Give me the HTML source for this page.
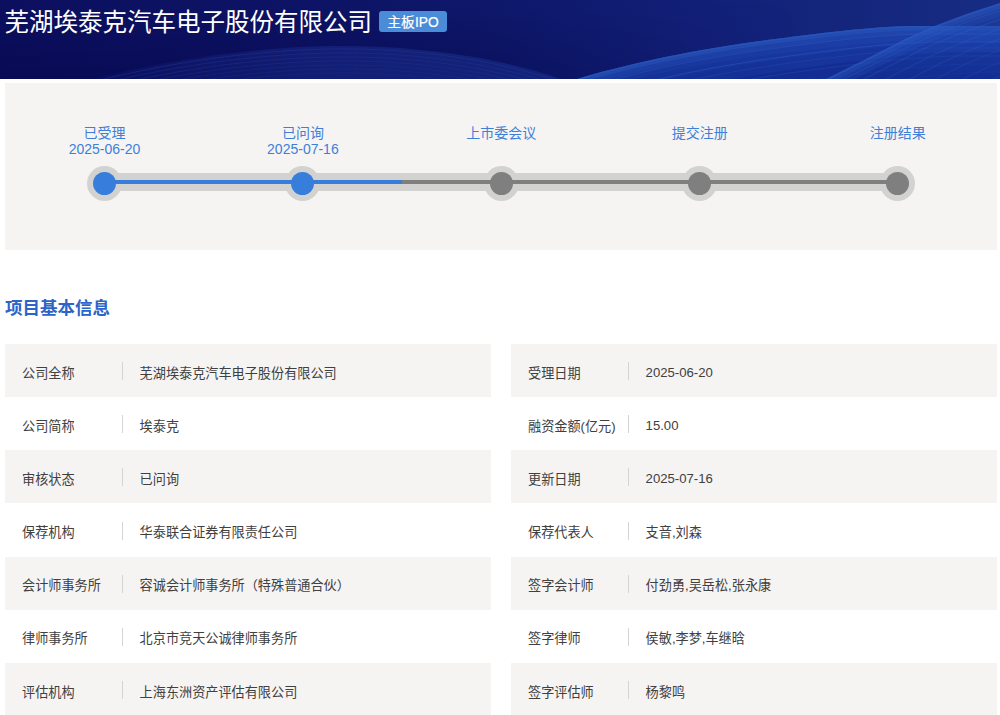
<!DOCTYPE html>
<html lang="zh-CN">
<head>
<meta charset="utf-8">
<title>芜湖埃泰克汽车电子股份有限公司</title>
<style>
*{box-sizing:border-box;margin:0;padding:0}
html,body{width:1000px;height:715px;overflow:hidden;background:#fff}
body{position:relative;font-family:"Liberation Sans","Noto Sans CJK SC",sans-serif;color:#333}
.hdr{position:absolute;left:0;top:0;width:1000px;height:79px;overflow:hidden;background:#0f1768}
.hdr svg{position:absolute;left:0;top:0}
.title{position:absolute;left:4.6px;top:5px;font-size:24.5px;line-height:36px;color:#fff;white-space:nowrap;font-weight:400}
.tag{position:absolute;left:379px;top:11px;width:68px;height:21px;border-radius:3px;background:#4a8cd8;color:#fff;font-size:13.8px;line-height:21px;padding-top:1.3px;-webkit-text-stroke:0.2px #fff;text-align:center;white-space:nowrap}
.prog{position:absolute;left:5px;top:83px;width:992px;height:167px;background:#f5f4f3}
.step{position:absolute;top:125px;width:160px;margin-left:-80px;text-align:center;color:#3e7fd9;font-size:14px;line-height:16px;white-space:nowrap}
.track{position:absolute;left:104px;top:173px;width:794px;height:18px;background:#d2d2d0}
.line{position:absolute;top:180px;height:4px}
.ring{position:absolute;top:166px;width:35px;height:35px;margin-left:-17.5px;border-radius:50%;background:#d2d2d0}
.dot{position:absolute;top:172px;width:23px;height:23px;margin-left:-11.5px;border-radius:50%}
.b{background:#377ddc}.g{background:#7f7f7f}
h2{position:absolute;left:5px;top:296px;font-size:17.5px;line-height:24px;color:#2c64c8;font-weight:700;white-space:nowrap}
.row{position:absolute;width:486px;height:53.17px;font-size:13.15px;line-height:53px;white-space:nowrap}
.row.o{background:#f5f4f3}
.row .k{position:absolute;left:17px;top:2.5px;color:#404040}
.row .v{position:absolute;left:134.6px;top:2.5px;color:#404040}
.row .v.n{top:1.9px}
.row i{position:absolute;left:117px;top:18px;width:1px;height:18px;background:#d4d4d4}
.L{left:5px}.R{left:511px}
</style>
</head>
<body>
<div class="hdr">
<svg width="1000" height="79" viewBox="0 0 1000 79">
<defs>
<linearGradient id="bg" x1="0" y1="0" x2="1" y2="0">
<stop offset="0" stop-color="#0d1060"/><stop offset="0.3" stop-color="#0e1466"/><stop offset="0.5" stop-color="#0f196c"/><stop offset="0.7" stop-color="#122078"/><stop offset="0.85" stop-color="#14267c"/><stop offset="1" stop-color="#172c84"/>
</linearGradient>
<linearGradient id="sh" x1="0" y1="0" x2="0" y2="1">
<stop offset="0" stop-color="#000040" stop-opacity="0"/><stop offset="1" stop-color="#000040" stop-opacity="0.35"/>
</linearGradient>
<linearGradient id="shm" x1="0" y1="0" x2="1" y2="0">
<stop offset="0" stop-color="#fff"/><stop offset="0.45" stop-color="#fff"/><stop offset="0.8" stop-color="#000"/>
</linearGradient>
<mask id="mk"><rect width="1000" height="79" fill="url(#shm)"/></mask>
<linearGradient id="wc" x1="0" y1="0" x2="1" y2="0">
<stop offset="0" stop-color="#15247e" stop-opacity="0.15"/><stop offset="0.5" stop-color="#16267f" stop-opacity="0.7"/><stop offset="1" stop-color="#172982" stop-opacity="0.75"/>
</linearGradient>
<linearGradient id="wa" x1="0" y1="0" x2="1" y2="0">
<stop offset="0" stop-color="#142d92"/><stop offset="0.5" stop-color="#18379e"/><stop offset="1" stop-color="#1b3fa8"/>
</linearGradient>
<linearGradient id="wb" x1="0" y1="0" x2="0" y2="1">
<stop offset="0" stop-color="#2450b8" stop-opacity="0.5"/><stop offset="0.55" stop-color="#1f48b0" stop-opacity="0.3"/><stop offset="1" stop-color="#122b8c" stop-opacity="0.45"/>
</linearGradient>
<clipPath id="ca"><path d="M577 79 C620 66 680 52 760 41 C820 33 870 27 910 26 L1000 26 L1000 79 Z"/></clipPath>
<clipPath id="cb"><path d="M826 79 C850 67 880 52 905 39 C935 25 965 14 1000 3 L1000 79 Z"/></clipPath>
<clipPath id="cc"><path d="M92 79 C160 62 240 48 330 46 C390 45 440 51 480 58 C515 65 545 73 560 79 Z"/></clipPath>
</defs>
<rect width="1000" height="79" fill="url(#bg)"/>
<rect width="1000" height="79" fill="url(#sh)" mask="url(#mk)"/>
<path d="M92 79 C160 62 240 48 330 46 C390 45 440 51 480 58 C515 65 545 73 560 79 Z" fill="url(#wc)"/>
<g clip-path="url(#cc)"><path d="M92 79 C160 62 240 48 330 46 C390 45 440 51 480 58 C515 65 545 73 560 79" transform="translate(0 3)" stroke="#22369a" stroke-opacity="0.5" stroke-width="1" fill="none"/><path d="M92 79 C160 62 240 48 330 46 C390 45 440 51 480 58 C515 65 545 73 560 79" transform="translate(0 7)" stroke="#22369a" stroke-opacity="0.4" stroke-width="1" fill="none"/><path d="M92 79 C160 62 240 48 330 46 C390 45 440 51 480 58 C515 65 545 73 560 79" transform="translate(0 11)" stroke="#22369a" stroke-opacity="0.4" stroke-width="1" fill="none"/><path d="M92 79 C160 62 240 48 330 46 C390 45 440 51 480 58 C515 65 545 73 560 79" transform="translate(0 15)" stroke="#22369a" stroke-opacity="0.35" stroke-width="1" fill="none"/><path d="M92 79 C160 62 240 48 330 46 C390 45 440 51 480 58 C515 65 545 73 560 79" transform="translate(0 19)" stroke="#22369a" stroke-opacity="0.3" stroke-width="1" fill="none"/><path d="M92 79 C160 62 240 48 330 46 C390 45 440 51 480 58 C515 65 545 73 560 79" transform="translate(0 23)" stroke="#22369a" stroke-opacity="0.3" stroke-width="1" fill="none"/><path d="M92 79 C160 62 240 48 330 46 C390 45 440 51 480 58 C515 65 545 73 560 79" transform="translate(0 27)" stroke="#22369a" stroke-opacity="0.25" stroke-width="1" fill="none"/></g>
<path d="M577 79 C620 66 680 52 760 41 C820 33 870 27 910 26 L1000 26 L1000 79 Z" fill="url(#wa)"/>
<g clip-path="url(#ca)" fill="none" stroke="#2a59bd">
<path d="M577 79 C620 66 680 52 760 41 C820 33 870 27 910 26 L1000 26" stroke-width="30" stroke-opacity="0.15"/>
<path d="M577 79 C620 66 680 52 760 41 C820 33 870 27 910 26 L1000 26 L1000 79 Z" transform="translate(50 26)" fill="#10268a" fill-opacity="0.5" stroke="none"/>
<path d="M577 79 C620 66 680 52 760 41 C820 33 870 27 910 26 L1000 26 L1000 79 Z" transform="translate(30 17)" fill="#10268a" fill-opacity="0.25" stroke="none"/>

<path d="M577 79 C620 66 680 52 760 41 C820 33 870 27 910 26 L1000 26" stroke-width="18" stroke-opacity="0.25"/>
<path d="M577 79 C620 66 680 52 760 41 C820 33 870 27 910 26 L1000 26" stroke-width="9" stroke-opacity="0.4"/>
<path d="M577 79 C620 66 680 52 760 41 C820 33 870 27 910 26 L1000 26" stroke-width="3" stroke-opacity="0.6"/>
<path d="M577 79 C620 66 680 52 760 41 C820 33 870 27 910 26 L1000 26" transform="translate(10 8)" stroke="#2f60c8" stroke-opacity="0.35" stroke-width="1" fill="none"/><path d="M577 79 C620 66 680 52 760 41 C820 33 870 27 910 26 L1000 26" transform="translate(22 16)" stroke="#2f60c8" stroke-opacity="0.45" stroke-width="1" fill="none"/><path d="M577 79 C620 66 680 52 760 41 C820 33 870 27 910 26 L1000 26" transform="translate(30 22)" stroke="#2f60c8" stroke-opacity="0.25" stroke-width="1" fill="none"/><path d="M577 79 C620 66 680 52 760 41 C820 33 870 27 910 26 L1000 26" transform="translate(44 30)" stroke="#2f60c8" stroke-opacity="0.3" stroke-width="1" fill="none"/><path d="M577 79 C620 66 680 52 760 41 C820 33 870 27 910 26 L1000 26" transform="translate(60 38)" stroke="#2f60c8" stroke-opacity="0.2" stroke-width="1" fill="none"/><path d="M577 79 C620 66 680 52 760 41 C820 33 870 27 910 26 L1000 26" transform="translate(80 46)" stroke="#2f60c8" stroke-opacity="0.2" stroke-width="1" fill="none"/>
</g>
<path d="M826 79 C850 67 880 52 905 39 C935 25 965 14 1000 3 L1000 79 Z" fill="url(#wb)"/>
<g clip-path="url(#cb)" fill="none" stroke="#2f5fc6">
<path d="M826 79 C850 67 880 52 905 39 C935 25 965 14 1000 3" stroke-width="26" stroke-opacity="0.18"/>
<path d="M826 79 C850 67 880 52 905 39 C935 25 965 14 1000 3" stroke-width="12" stroke-opacity="0.25"/>
<path d="M826 79 C850 67 880 52 905 39 C935 25 965 14 1000 3" stroke-width="4" stroke-opacity="0.4"/>
<path d="M826 79 C850 67 880 52 905 39 C935 25 965 14 1000 3" transform="translate(6 6)" stroke="#3a6ad0" stroke-opacity="0.3" stroke-width="1" fill="none"/><path d="M826 79 C850 67 880 52 905 39 C935 25 965 14 1000 3" transform="translate(14 12)" stroke="#3a6ad0" stroke-opacity="0.3" stroke-width="1" fill="none"/><path d="M826 79 C850 67 880 52 905 39 C935 25 965 14 1000 3" transform="translate(24 18)" stroke="#3a6ad0" stroke-opacity="0.25" stroke-width="1" fill="none"/><path d="M826 79 C850 67 880 52 905 39 C935 25 965 14 1000 3" transform="translate(36 24)" stroke="#3a6ad0" stroke-opacity="0.25" stroke-width="1" fill="none"/><path d="M826 79 C850 67 880 52 905 39 C935 25 965 14 1000 3" transform="translate(50 30)" stroke="#3a6ad0" stroke-opacity="0.2" stroke-width="1" fill="none"/><path d="M826 79 C850 67 880 52 905 39 C935 25 965 14 1000 3" transform="translate(66 36)" stroke="#3a6ad0" stroke-opacity="0.2" stroke-width="1" fill="none"/><path d="M826 79 C850 67 880 52 905 39 C935 25 965 14 1000 3" transform="translate(84 42)" stroke="#3a6ad0" stroke-opacity="0.2" stroke-width="1" fill="none"/>
</g>
</svg>
</div>
<div class="title">芜湖埃泰克汽车电子股份有限公司</div>
<div class="tag">主板IPO</div>

<div class="prog"></div>
<div class="track"></div>
<div class="ring" style="left:104.5px"></div>
<div class="ring" style="left:302.9px"></div>
<div class="ring" style="left:501.3px"></div>
<div class="ring" style="left:699.8px"></div>
<div class="ring" style="left:897.8px"></div>
<div class="line b" style="left:104px;width:298px"></div>
<div class="line g" style="left:402px;width:496px"></div>
<div class="dot b" style="left:104.5px"></div>
<div class="dot b" style="left:302.9px"></div>
<div class="dot g" style="left:501.3px"></div>
<div class="dot g" style="left:699.8px"></div>
<div class="dot g" style="left:897.8px"></div>
<div class="step" style="left:104.5px">已受理<br>2025-06-20</div>
<div class="step" style="left:302.9px">已问询<br>2025-07-16</div>
<div class="step" style="left:501.3px">上市委会议</div>
<div class="step" style="left:699.8px">提交注册</div>
<div class="step" style="left:897.8px">注册结果</div>

<h2>项目基本信息</h2>

<div class="row o L" style="top:344.0px"><span class="k">公司全称</span><i></i><span class="v">芜湖埃泰克汽车电子股份有限公司</span></div>
<div class="row L" style="top:397.17px"><span class="k">公司简称</span><i></i><span class="v">埃泰克</span></div>
<div class="row o L" style="top:450.33px"><span class="k">审核状态</span><i></i><span class="v">已问询</span></div>
<div class="row L" style="top:503.5px"><span class="k">保荐机构</span><i></i><span class="v">华泰联合证券有限责任公司</span></div>
<div class="row o L" style="top:556.67px"><span class="k">会计师事务所</span><i></i><span class="v">容诚会计师事务所（特殊普通合伙）</span></div>
<div class="row L" style="top:609.83px"><span class="k">律师事务所</span><i></i><span class="v">北京市竞天公诚律师事务所</span></div>
<div class="row o L" style="top:663.0px"><span class="k">评估机构</span><i></i><span class="v">上海东洲资产评估有限公司</span></div>

<div class="row o R" style="top:344.0px"><span class="k">受理日期</span><i></i><span class="v n">2025-06-20</span></div>
<div class="row R" style="top:397.17px"><span class="k">融资金额(亿元)</span><i></i><span class="v n">15.00</span></div>
<div class="row o R" style="top:450.33px"><span class="k">更新日期</span><i></i><span class="v n">2025-07-16</span></div>
<div class="row R" style="top:503.5px"><span class="k">保荐代表人</span><i></i><span class="v">支音,刘森</span></div>
<div class="row o R" style="top:556.67px"><span class="k">签字会计师</span><i></i><span class="v">付劲勇,吴岳松,张永康</span></div>
<div class="row R" style="top:609.83px"><span class="k">签字律师</span><i></i><span class="v">侯敏,李梦,车继晗</span></div>
<div class="row o R" style="top:663.0px"><span class="k">签字评估师</span><i></i><span class="v">杨黎鸣</span></div>
</body>
</html>
